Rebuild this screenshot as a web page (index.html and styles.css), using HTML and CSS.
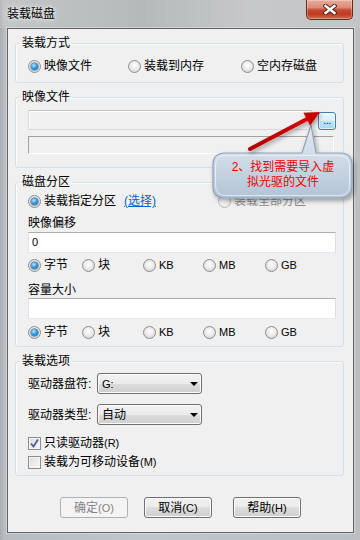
FILE: index.html
```html
<!DOCTYPE html>
<html lang="zh-CN">
<head>
<meta charset="utf-8">
<title>装载磁盘</title>
<link rel="stylesheet" href="styles.css">
</head>
<body>
<div class="window">
  <div class="titlebar">
    <span class="title">装载磁盘</span>
    <span class="close">
      <svg width="14" height="11" viewBox="0 0 14 11"><path d="M2.5 2 L11.5 9 M11.5 2 L2.5 9" stroke="#4a1f16" stroke-width="4.4" stroke-linecap="square"/><path d="M2.5 2 L11.5 9 M11.5 2 L2.5 9" stroke="#ffffff" stroke-width="2.4" stroke-linecap="square"/></svg>
    </span>
  </div>
  <div class="client">
    <fieldset class="group">
      <legend>装载方式</legend>
      <div class="gb g1">
        <div class="opts">
          <span class="opt w100"><span class="radio on"></span>映像文件</span>
          <span class="opt w113"><span class="radio"></span>装载到内存</span>
          <span class="opt"><span class="radio"></span>空内存磁盘</span>
        </div>
      </div>
    </fieldset>

    <fieldset class="group">
      <legend>映像文件</legend>
      <div class="gb g2">
        <div class="file-row">
          <span class="field file"></span>
          <span class="browse">...</span>
        </div>
        <span class="field sunken"></span>
      </div>
    </fieldset>

    <fieldset class="group">
      <legend>磁盘分区</legend>
      <div class="gb g3">
        <div class="opts">
          <span class="opt w96"><span class="radio on"></span>装载指定分区</span>
          <a class="link w94">(选择)</a>
          <span class="opt disabled"><span class="radio"></span>装载全部分区</span>
        </div>
        <div class="label l1">映像偏移</div>
        <div class="textbox t1">0</div>
        <div class="opts units u1">
          <span class="opt c1"><span class="radio on"></span>字节</span>
          <span class="opt c2"><span class="radio"></span>块</span>
          <span class="opt c3"><span class="radio"></span><span class="lat">KB</span></span>
          <span class="opt c4"><span class="radio"></span><span class="lat">MB</span></span>
          <span class="opt"><span class="radio"></span><span class="lat">GB</span></span>
        </div>
        <div class="label l2">容量大小</div>
        <div class="textbox t2"></div>
        <div class="opts units u2">
          <span class="opt c1"><span class="radio on"></span>字节</span>
          <span class="opt c2"><span class="radio"></span>块</span>
          <span class="opt c3"><span class="radio"></span><span class="lat">KB</span></span>
          <span class="opt c4"><span class="radio"></span><span class="lat">MB</span></span>
          <span class="opt"><span class="radio"></span><span class="lat">GB</span></span>
        </div>
      </div>
    </fieldset>

    <fieldset class="group">
      <legend>装载选项</legend>
      <div class="gb g4">
        <div class="combo-row">
          <span class="clabel">驱动器盘符:</span>
          <span class="combo"><span class="lat">G:</span><svg class="arrow" width="8" height="4" viewBox="0 0 8 4"><path d="M0 0 H8 L4 4 Z" fill="#000"/></svg></span>
        </div>
        <div class="combo-row r2">
          <span class="clabel">驱动器类型:</span>
          <span class="combo"><span>自动</span><svg class="arrow" width="8" height="4" viewBox="0 0 8 4"><path d="M0 0 H8 L4 4 Z" fill="#000"/></svg></span>
        </div>
        <div class="opts cb1">
          <span class="opt"><span class="check on"><svg width="11" height="11" viewBox="0 0 11 11"><path d="M2 5.5 L4.5 8.5 L9 1.5" fill="none" stroke="#4d5c9c" stroke-width="1.8"/></svg></span><span>只读驱动器<span class="lat">(R)</span></span></span>
        </div>
        <div class="opts cb2">
          <span class="opt"><span class="check"></span><span>装载为可移动设备<span class="lat">(M)</span></span></span>
        </div>
      </div>
    </fieldset>

    <div class="buttons">
      <span class="btn disabled"><span>确定<span class="lat">(O)</span></span></span>
      <span class="btn b2"><span>取消<span class="lat">(C)</span></span></span>
      <span class="btn b3"><span>帮助<span class="lat">(H)</span></span></span>
    </div>
  </div>

  <div class="callout">
    <svg class="callout-art" width="160" height="110" viewBox="0 0 160 110">
      <defs>
        <linearGradient id="bub" x1="0" y1="0" x2="0" y2="1">
          <stop offset="0" stop-color="#e3eaf2"/>
          <stop offset="0.45" stop-color="#cfdbe6"/>
          <stop offset="1" stop-color="#b3c4d6"/>
        </linearGradient>
        <linearGradient id="arr" x1="0" y1="1" x2="1" y2="0">
          <stop offset="0" stop-color="#b00000"/>
          <stop offset="1" stop-color="#d80000"/>
        </linearGradient>
        <filter id="sh" x="-20%" y="-20%" width="140%" height="160%">
          <feDropShadow dx="1.5" dy="2.5" stdDeviation="2" flood-color="#000" flood-opacity="0.35"/>
        </filter>
      </defs>
      <path d="M25 53 L102 53 L111 25 L116 53 L140 53 Q152 53 152 65 L152 86 Q152 98 140 98 L25 98 Q13 98 13 86 L13 65 Q13 53 25 53 Z" fill="url(#bub)" stroke="#8ea3bb" stroke-width="1.2" filter="url(#sh)"/>
      <path d="M26 55.5 L138 55.5 Q149.5 55.5 149.5 66 L149.5 85 Q149.5 95.5 139 95.5 L26 95.5 Q15.5 95.5 15.5 85 L15.5 66 Q15.5 55.5 26 55.5 Z" fill="none" stroke="#ffffff" stroke-opacity="0.55" stroke-width="1"/>
      <g filter="url(#sh)">
        <path d="M50 49 L107 19" stroke="url(#arr)" stroke-width="4" stroke-linecap="round"/>
        <path d="M120 12 L103.4 12.8 L110.2 25.4 Z" fill="#c80000"/>
      </g>
    </svg>
    <div class="callout-text">2、找到需要导入虚<br>拟光驱的文件</div>
  </div>
</div>
</body>
</html>
```

FILE: styles.css
```css
* { box-sizing: border-box; }

body {
  margin: 0;
  font: 12px/16px "Liberation Sans", "Noto Sans CJK SC", sans-serif;
  color: #000;
}

.window {
  position: relative;
  width: 360px;
  height: 540px;
  display: flex;
  flex-direction: column;
  overflow: hidden;
  background: linear-gradient(90deg, #a9acae 0px, #b9bcbe 4px, #c3c6c8 40%, #bcbfc1 100%);
}

.titlebar {
  height: 28px;
  flex: none;
  display: flex;
  justify-content: space-between;
  align-items: flex-start;
  background: linear-gradient(90deg, rgba(255,255,255,0.15), rgba(90,95,90,0.12) 40%, rgba(255,255,255,0.1) 70%);
}

.title {
  margin: 6px 0 0 7px;
  text-shadow: 0 0 6px #f4f4f4, 0 0 3px #f4f4f4;
}

.close {
  width: 47px;
  height: 20px;
  margin-right: 7px;
  display: flex;
  align-items: center;
  justify-content: center;
  border: 1px solid #6b2a1e;
  border-top: none;
  border-radius: 0 0 5px 5px;
  background: linear-gradient(#e9ab9b 0%, #da8b77 40%, #c54a31 52%, #bf3a21 75%, #d66a4e 100%);
  box-shadow: inset 0 0 0 1px rgba(255, 255, 255, 0.3);
}

.client {
  margin: 0 6px 0 7px;
  height: 505px;
  flex: none;
  border: 1px solid #5f6367;
  background: #f0f0f0;
  display: flex;
  flex-direction: column;
  box-shadow: 0 0 0 1px rgba(255, 255, 255, 0.35);
}

.group {
  margin: 6px 9px 0 7px;
  padding: 0;
  min-width: 0;
  border: 1px solid #d5dfe5;
  border-radius: 3px;
  box-shadow: inset 1px 1px 0 #fbfcfd;
}

.group legend {
  margin-left: 4px;
  padding: 0 2px;
  line-height: 16px;
}

.gb { padding-left: 12px; }
.g1 { padding-top: 7px; padding-bottom: 8px; }
.g2 { padding-top: 5px; padding-bottom: 13px; }
.g3 { padding-top: 3px; padding-bottom: 6px; }
.g4 { padding-top: 4px; padding-bottom: 5px; }

.opts {
  display: flex;
  align-items: center;
  height: 16px;
}

.opt {
  display: flex;
  align-items: center;
  gap: 3px;
  white-space: nowrap;
  flex: none;
}

.w100 { width: 100px; }
.w113 { width: 113px; }
.w96 { width: 96px; }
.w94 { width: 94px; }
.c1 { width: 54px; }
.c2 { width: 61px; }
.c3 { width: 60px; }
.c4 { width: 62px; }

.lat { font-family: "Liberation Sans", sans-serif; font-size: 11px; }

.radio {
  width: 13px;
  height: 13px;
  flex: none;
  border-radius: 50%;
  border: 1px solid #8b8e90;
  background: radial-gradient(circle at 50% 40%, #ffffff 0%, #ececec 45%, #c9cbcc 100%);
  display: flex;
  align-items: center;
  justify-content: center;
}

.radio.on::after {
  content: "";
  width: 7px;
  height: 7px;
  border-radius: 50%;
  background: radial-gradient(circle at 40% 35%, #c4e9fc 0%, #3ea3e2 40%, #0e5a9d 100%);
  box-shadow: 0 0 0 0.5px #1c4f80;
}

.disabled { color: #8d8d8d; }
.disabled .radio {
  border-color: #b7b9bb;
  background: radial-gradient(circle at 50% 40%, #fbfbfb, #e6e6e6);
}

.check {
  width: 13px;
  height: 13px;
  flex: none;
  border: 1px solid #8b8e90;
  background: linear-gradient(135deg, #dcdcdc, #fafafa);
  box-shadow: inset 0 0 0 1px #f4f4f4;
  display: flex;
  align-items: center;
  justify-content: center;
}

.link {
  color: #0066cc;
  text-decoration: underline;
  flex: none;
}

.file-row {
  display: flex;
  align-items: flex-end;
}

.field { display: block; }

.file {
  width: 284px;
  height: 20px;
  border: 1px solid #d6d8da;
  border-top-color: #c2c4c6;
  background: #f0f0f0;
  box-shadow: inset 1px 1px 0 #ffffff;
}

.browse {
  width: 18px;
  height: 18px;
  margin-left: 6px;
  border: 1px solid #3c7fb1;
  border-radius: 3px;
  background: linear-gradient(#eaf6fd 0%, #d9f0fc 50%, #bee6fd 50%, #a7d9f5 100%);
  box-shadow: inset 0 0 0 1px rgba(255, 255, 255, 0.6);
  font: 11px/14px "Liberation Sans", sans-serif;
  color: #15254f;
  text-align: center;
  letter-spacing: -0.5px;
}

.sunken {
  width: 306px;
  height: 18px;
  margin-top: 6px;
  border: 1px solid;
  border-color: #a0a0a0 #ffffff #ffffff #a0a0a0;
  background: #f0f0f0;
}

.label { height: 16px; }
.l1 { margin-top: 6px; }
.l2 { margin-top: 9px; }

.textbox {
  width: 308px;
  height: 21px;
  border: 1px solid;
  border-color: #abadb3 #dbdfe6 #e3e9ef #e2e3ea;
  background: #ffffff;
  padding-left: 3px;
  line-height: 19px;
  font-family: "Liberation Sans", sans-serif;
  font-size: 11px;
}
.t1 { margin-top: 1px; }
.t2 { margin-top: 0; }
.u1 { margin-top: 4px; }
.u2 { margin-top: 5px; }

.combo-row {
  display: flex;
  align-items: center;
  height: 21px;
}
.combo-row.r2 { margin-top: 10px; }

.clabel { width: 69px; flex: none; }

.combo {
  width: 105px;
  height: 21px;
  border: 1px solid #707070;
  border-radius: 3px;
  background: linear-gradient(#f2f2f2 0%, #ebebeb 50%, #dddddd 50%, #cfcfcf 100%);
  box-shadow: inset 0 0 0 1px #fbfbfb;
  display: flex;
  align-items: center;
  justify-content: space-between;
  padding: 0 3px 0 4px;
}

.cb1 { margin-top: 10px; }
.cb2 { margin-top: 3px; }

.buttons {
  display: flex;
  margin-top: 21px;
  padding-left: 52px;
}

.btn {
  width: 68px;
  height: 21px;
  border: 1px solid #707070;
  border-radius: 3px;
  background: linear-gradient(#f2f2f2 0%, #ebebeb 50%, #dddddd 50%, #cfcfcf 100%);
  box-shadow: inset 0 0 0 1px #fcfcfc;
  display: flex;
  align-items: center;
  justify-content: center;
  flex: none;
}

.btn.disabled {
  border-color: #adb2b5;
  background: #f4f4f4;
  box-shadow: none;
  color: #838383;
}

.b2 { margin-left: 16px; }
.b3 { margin-left: 21px; }

.callout {
  position: absolute;
  left: 200px;
  top: 100px;
  width: 160px;
  height: 110px;
}

.callout-art {
  position: absolute;
  left: 0;
  top: 0;
}

.callout-text {
  position: relative;
  margin: 60px 0 0 13px;
  width: 140px;
  text-align: center;
  line-height: 15px;
  color: #ee0000;
}
```
